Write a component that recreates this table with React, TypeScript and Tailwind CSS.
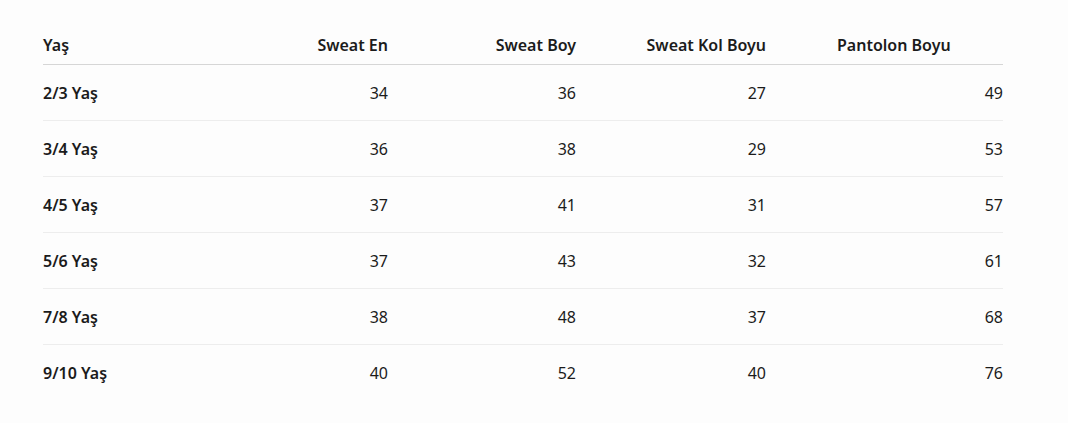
const rows: [string, number, number, number, number][] = [
  ['2/3 Yaş', 34, 36, 27, 49],
  ['3/4 Yaş', 36, 38, 29, 53],
  ['4/5 Yaş', 37, 41, 31, 57],
  ['5/6 Yaş', 37, 43, 32, 61],
  ['7/8 Yaş', 38, 48, 37, 68],
  ['9/10 Yaş', 40, 52, 40, 76]
];

const cols = 'grid grid-cols-[157px_188px_188px_190px_237px]';

export default function App() {
  return (
    <div className="min-h-[423px] bg-[#fdfdfd] px-[43px] pt-[26px] font-['Noto_Sans','Open_Sans',sans-serif] text-[16px] text-[#1b1b1b]">
      <div className="w-[960px]">
        <div className={`${cols} h-[39px] items-center border-b border-[#d6d6d6] pb-px font-semibold`}>
          <div>Yaş</div>
          <div className="text-right">Sweat En</div>
          <div className="text-right">Sweat Boy</div>
          <div className="text-right">Sweat Kol Boyu</div>
          <div className="pl-[71px]">Pantolon Boyu</div>
        </div>
        {rows.map(([age, en, boy, kol, pantolon], i) => (
          <div
            key={age}
            className={`${cols} h-[56px] items-center ${i < rows.length - 1 ? 'border-b border-[#ededed]' : ''}`}
          >
            <div className="font-semibold">{age}</div>
            <div className="text-right">{en}</div>
            <div className="text-right">{boy}</div>
            <div className="text-right">{kol}</div>
            <div className="text-right">{pantolon}</div>
          </div>
        ))}
      </div>
    </div>
  );
}
